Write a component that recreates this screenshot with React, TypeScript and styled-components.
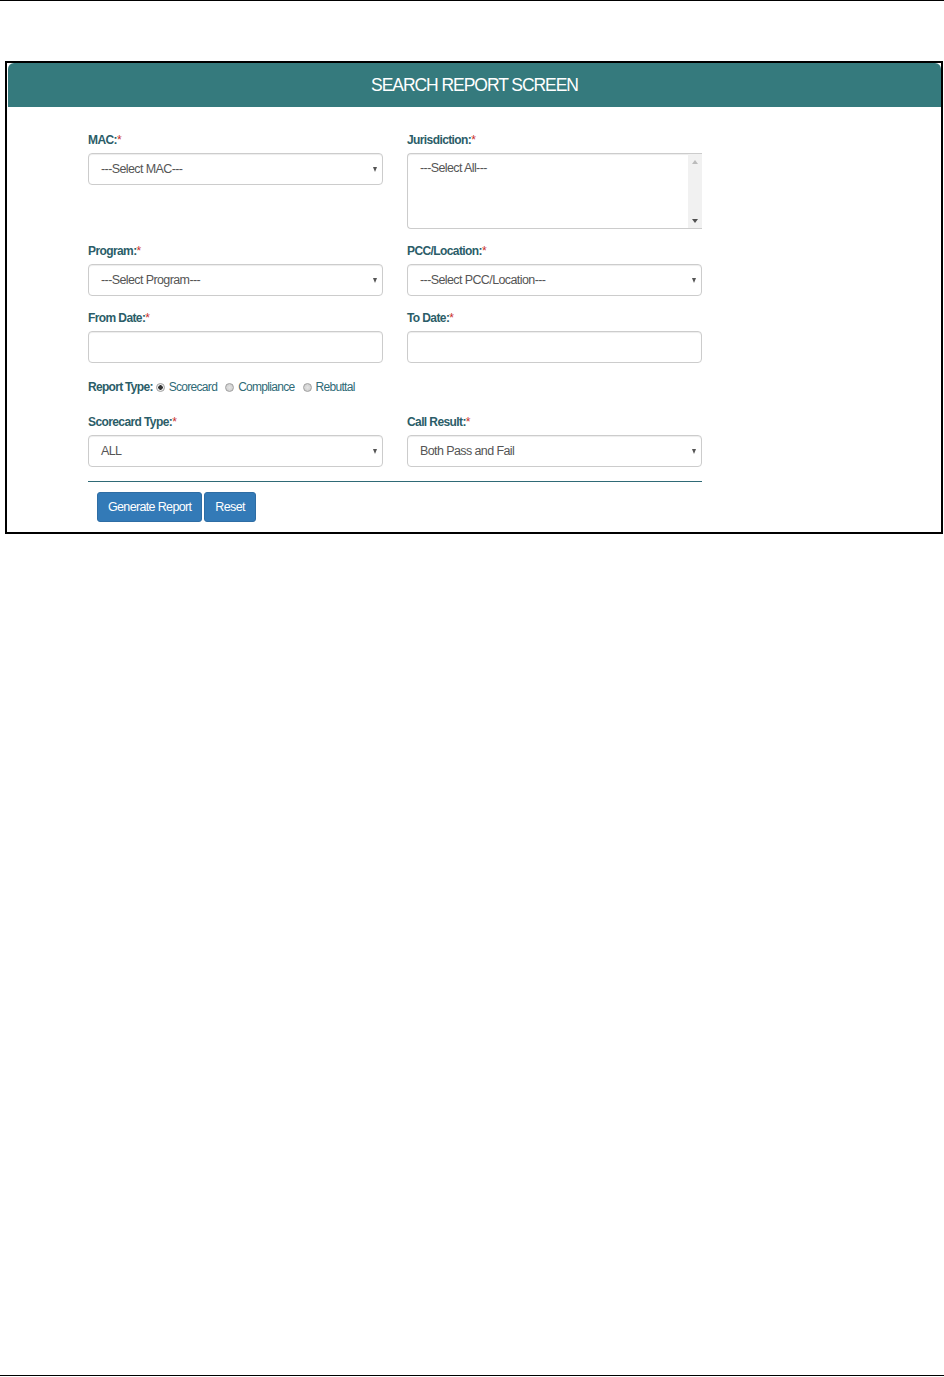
import React from 'react';
import styled, { createGlobalStyle } from 'styled-components';

const GlobalStyle = createGlobalStyle`
  html, body {
    margin: 0;
    padding: 0;
    background: #fff;
  }
  body {
    font-family: 'Liberation Sans', Arial, sans-serif;
  }
`;

const Page = styled.div`
  box-sizing: border-box;
  width: 944px;
  height: 1377px;
  border-top: 1px solid #000;
  display: flex;
  flex-direction: column;
`;

const BottomRule = styled.div`
  margin-top: auto;
  margin-bottom: 1px;
  height: 1px;
  background: #000;
`;

const Frame = styled.div`
  margin: 60px 0 0 5px;
  width: 938px;
  box-sizing: border-box;
  border: 2px solid #000;
  background: #fff;
`;

const Header = styled.div`
  height: 44px;
  margin: 0 0 0 1px;
  background: #357a7d;
  border-radius: 6px 6px 0 0;
  display: flex;
  align-items: center;
  justify-content: center;
  color: #fff;
  font-size: 17.5px;
  letter-spacing: -1.05px;
`;

const Form = styled.div`
  padding: 26px 0 10px 81px;
  width: 614px;
`;

const Grid = styled.div`
  display: grid;
  grid-template-columns: 295px 295px;
  column-gap: 24px;
  row-gap: 15px;
  align-items: start;
`;

const Field = styled.div`
  display: flex;
  flex-direction: column;
`;

const Label = styled.div`
  height: 14px;
  line-height: 14px;
  margin-bottom: 6px;
  font-size: 12px;
  font-weight: bold;
  letter-spacing: -0.6px;
  color: #2b5d68;
`;

const Req = styled.span`
  color: #c9302c;
  font-weight: normal;
`;

const Box = styled.div`
  box-sizing: border-box;
  height: 32px;
  border: 1px solid #ccc;
  border-radius: 4px;
  box-shadow: inset 0 1px 1px rgba(0, 0, 0, 0.075);
  background: #fff;
  display: flex;
  align-items: center;
  justify-content: space-between;
  padding: 0 5px 0 12px;
  font-size: 12.5px;
  letter-spacing: -0.6px;
  color: #555;
`;

const Caret = styled.span`
  width: 0;
  height: 0;
  border-left: 2.5px solid transparent;
  border-right: 2.5px solid transparent;
  border-top: 5px solid #555;
`;

const ListBox = styled.div`
  box-sizing: border-box;
  height: 76px;
  border: 1px solid #ccc;
  border-right: none;
  border-radius: 4px 0 0 4px;
  box-shadow: inset 0 1px 1px rgba(0, 0, 0, 0.075);
  display: flex;
  font-size: 12.5px;
  letter-spacing: -0.6px;
  color: #555;
`;

const ListText = styled.div`
  flex: 1;
  padding: 6px 12px;
  line-height: 16px;
`;

const ScrollTrack = styled.div`
  width: 14px;
  background: #f1f1f1;
  display: flex;
  flex-direction: column;
  justify-content: space-between;
  align-items: center;
  padding: 6px 0 5px;
`;

const Arrow = styled.span<{ $up?: boolean; $dim?: boolean }>`
  width: 0;
  height: 0;
  border-left: 3px solid transparent;
  border-right: 3px solid transparent;
  ${p =>
    p.$up
      ? `border-bottom: 4px solid ${p.$dim ? '#bbb' : '#505050'};`
      : `border-top: 4px solid ${p.$dim ? '#bbb' : '#505050'};`}
`;

const RadioRow = styled.div`
  grid-column: 1 / 3;
  display: flex;
  align-items: center;
  height: 14px;
  margin: 2px 0 6px;
  font-size: 12px;
  letter-spacing: -0.7px;
`;

const RowLabel = styled.span`
  font-weight: bold;
  color: #2b5d68;
  margin-right: 3px;
`;

const RadioDot = styled.span<{ $on?: boolean }>`
  box-sizing: border-box;
  width: 9px;
  height: 9px;
  border-radius: 50%;
  border: 1px solid #a0a0a0;
  background: ${p =>
    p.$on
      ? 'radial-gradient(circle, #333 0 2px, #eee 2.5px)'
      : 'radial-gradient(circle, #e4e4e4, #c8c8c8)'};
  margin: 0 4px 0 0;
`;

const RadioText = styled.span`
  color: #2f6b77;
  margin-right: 8px;
`;

const Rule = styled.div`
  height: 1px;
  background: #2f6a76;
  margin: 14px 0 10px;
`;

const Buttons = styled.div`
  display: flex;
  gap: 2px;
  padding-left: 9px;
`;

const Button = styled.div`
  height: 30px;
  padding: 0 10px;
  display: flex;
  align-items: center;
  background: #337ab7;
  border: 1px solid #2e6da4;
  border-radius: 3px;
  box-sizing: border-box;
  color: #fff;
  font-size: 12.5px;
  letter-spacing: -0.65px;
`;

const Select: React.FC<{ text: string }> = ({ text }) => (
  <Box>
    <span>{text}</span>
    <Caret />
  </Box>
);

const FieldLabel: React.FC<{ text: string }> = ({ text }) => (
  <Label>
    {text}
    <Req>*</Req>
  </Label>
);

export default function App() {
  return (
    <Page>
      <GlobalStyle />
      <Frame>
        <Header>SEARCH REPORT SCREEN</Header>
        <Form>
          <Grid>
            <Field>
              <FieldLabel text="MAC:" />
              <Select text="---Select MAC---" />
            </Field>
            <Field>
              <FieldLabel text="Jurisdiction:" />
              <ListBox>
                <ListText>---Select All---</ListText>
                <ScrollTrack>
                  <Arrow $up $dim />
                  <Arrow />
                </ScrollTrack>
              </ListBox>
            </Field>
            <Field>
              <FieldLabel text="Program:" />
              <Select text="---Select Program---" />
            </Field>
            <Field>
              <FieldLabel text="PCC/Location:" />
              <Select text="---Select PCC/Location---" />
            </Field>
            <Field>
              <FieldLabel text="From Date:" />
              <Box />
            </Field>
            <Field>
              <FieldLabel text="To Date:" />
              <Box />
            </Field>
            <RadioRow>
              <RowLabel>Report Type:</RowLabel>
              <RadioDot $on />
              <RadioText>Scorecard</RadioText>
              <RadioDot />
              <RadioText>Compliance</RadioText>
              <RadioDot />
              <RadioText>Rebuttal</RadioText>
            </RadioRow>
            <Field>
              <FieldLabel text="Scorecard Type:" />
              <Select text="ALL" />
            </Field>
            <Field>
              <FieldLabel text="Call Result:" />
              <Select text="Both Pass and Fail" />
            </Field>
          </Grid>
          <Rule />
          <Buttons>
            <Button>Generate Report</Button>
            <Button>Reset</Button>
          </Buttons>
        </Form>
      </Frame>
      <BottomRule />
    </Page>
  );
}
